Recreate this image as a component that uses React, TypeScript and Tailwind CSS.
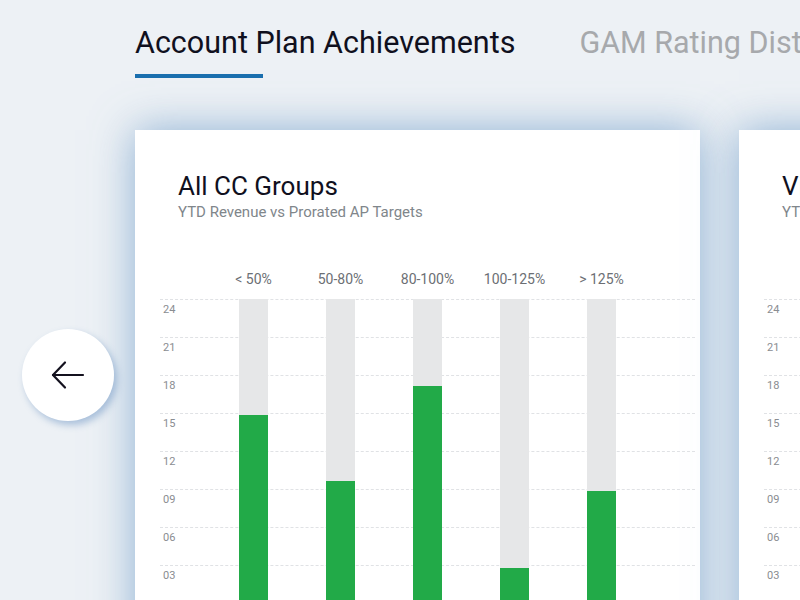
const groups = [
  { label: "< 50%", value: 14.85 },
  { label: "50-80%", value: 9.65 },
  { label: "80-100%", value: 17.15 },
  { label: "100-125%", value: 2.8 },
  { label: "> 125%", value: 8.85 },
];

const ticks = ["24", "21", "18", "15", "12", "09", "06", "03"];
const rowHeight = 38;
const maxValue = 24;

export default function App() {
  return (
    <div
      className="relative h-[600px] w-[800px] overflow-hidden bg-[#edf1f5]"
      style={{ fontFamily: "Roboto, 'Noto Sans', sans-serif" }}
    >
      <nav className="flex gap-[64px] whitespace-nowrap pl-[135px] pt-[24px]">
        <div className="flex shrink-0 flex-col">
          <span className="text-[30.5px] leading-[38px] text-[#10101e]">Account Plan Achievements</span>
          <span className="mt-[12px] h-[4px] w-[128px] bg-[#1a6fae]" />
        </div>
        <span className="shrink-0 text-[30.5px] leading-[38px] text-[#a7a9ac]">GAM Rating Distribution</span>
      </nav>

      <div className="mt-[52px] flex gap-[39px] pl-[135px]">
        <ChartCard title="All CC Groups" data={groups} />
        <ChartCard title="Vietnam" data={groups} />
      </div>

      <button
        type="button"
        className="absolute left-[22px] top-[329px] grid h-[92px] w-[92px] place-items-center rounded-full bg-white shadow-[3px_4px_7px_rgba(70,120,180,0.4)]"
      >
        <svg width="40" height="40" viewBox="0 0 40 40" fill="none" stroke="#14121f" strokeWidth="2.2" strokeLinecap="round" strokeLinejoin="round">
          <path d="M5 20H35" />
          <path d="M17 7.5L5 20L17 32.5" />
        </svg>
      </button>
    </div>
  );
}

function ChartCard({ title, data }: { title: string; data: { label: string; value: number }[] }) {
  return (
    <section className="h-[520px] w-[565px] shrink-0 bg-white pt-[40px] shadow-[0_0_40px_rgba(110,155,200,0.75)]">
      <div className="whitespace-nowrap pl-[43px]">
        <h2 className="text-[26px] leading-[32px] text-[#10101e]">{title}</h2>
        <p className="text-[15px] leading-[20px] text-[#80868b]">YTD Revenue vs Prorated AP Targets</p>
      </div>

      <div className="mt-[47px] flex pl-[75px]">
        {data.map((g) => (
          <span key={g.label} className="w-[87px] text-center text-[14px] leading-[20px] text-[#6c6f74]">
            {g.label}
          </span>
        ))}
      </div>

      <div className="relative ml-[25px] mr-[5px] mt-[10px]">
        {ticks.map((t) => (
          <div key={t} className="h-[38px] border-t border-dashed border-[#e0e2e5] pl-[3px] pt-[2px]">
            <span className="block text-[11px] leading-[16px] text-[#8a8d91]">{t}</span>
          </div>
        ))}

        <div className="absolute left-0 top-0 flex pl-[79px]">
          {data.map((g) => (
            <div key={g.label} className="mr-[58px] flex h-[304px] w-[29px] flex-col justify-end bg-[#e6e7e8]">
              <div className="bg-[#22aa48]" style={{ height: (g.value / maxValue) * rowHeight * 8 }} />
            </div>
          ))}
        </div>
      </div>
    </section>
  );
}
